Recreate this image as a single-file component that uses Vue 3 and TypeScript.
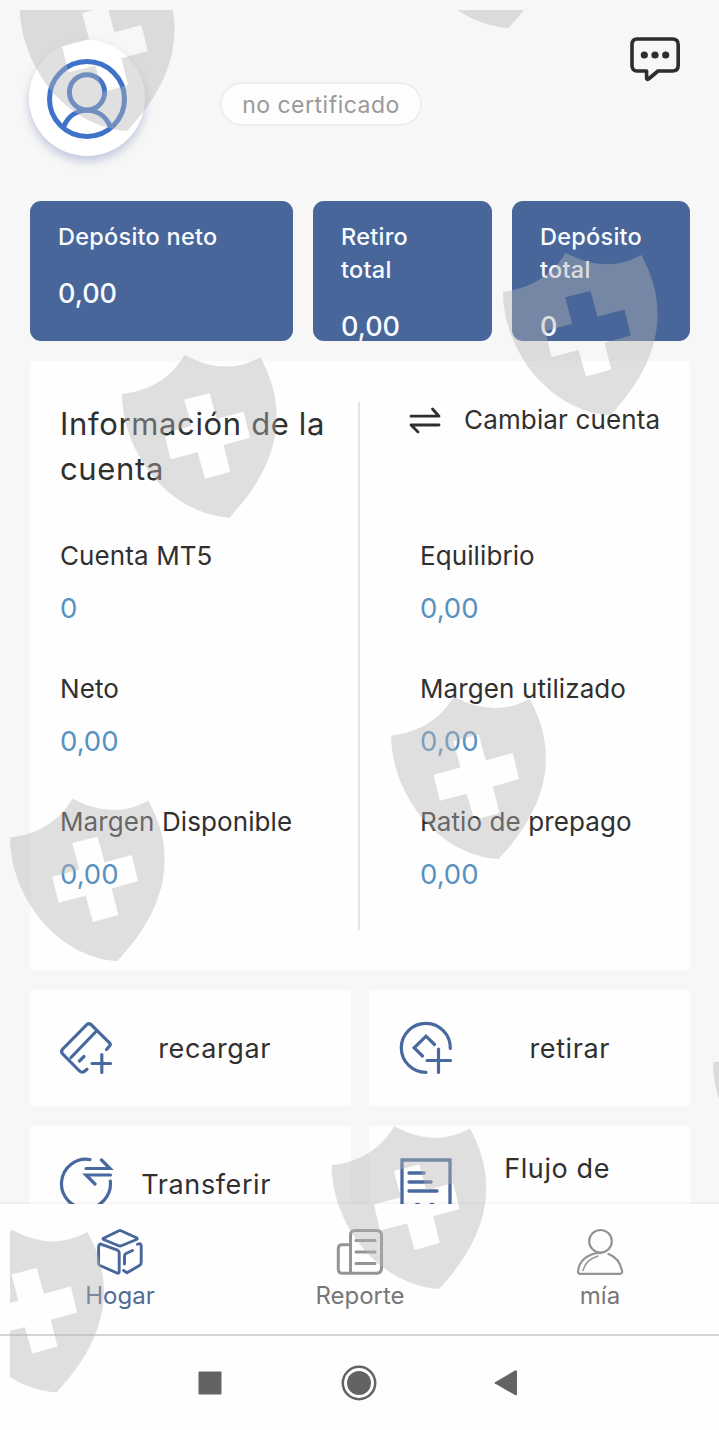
<script setup lang="ts">
interface Entry { label: string; value: string }

const totals: Entry[] = [
  { label: 'Depósito neto', value: '0,00' },
  { label: 'Retiro total', value: '0,00' },
  { label: 'Depósito total', value: '0' },
]
const left: Entry[] = [
  { label: 'Cuenta MT5', value: '0' },
  { label: 'Neto', value: '0,00' },
  { label: 'Margen Disponible', value: '0,00' },
]
const right: Entry[] = [
  { label: 'Equilibrio', value: '0,00' },
  { label: 'Margen utilizado', value: '0,00' },
  { label: 'Ratio de prepago', value: '0,00' },
]
const shields: [number, number][] = [
  [19.8, -31.7], [401, -134.6], [502.9, 252.7], [122, 355], [391.2, 696.4],
  [10, 798.4], [331.6, 1126.3], [-50.8, 1229.8], [713, 1023.3],
]
</script>

<template>
  <div class="app">
    <main class="content">
      <header class="top">
        <div class="avatar">
          <svg width="84" height="84" viewBox="0 0 84 84" fill="none" stroke="#3f73c9" stroke-width="5">
            <circle cx="42" cy="42" r="37.5" />
            <circle cx="42" cy="35.3" r="17.6" />
            <path d="M18.5 70C23 59 32 53.300 42 53.300S61 59 65.500 70" />
          </svg>
        </div>
        <span class="pill"><span>no certificado</span></span>
        <svg class="chat" width="52" height="46" viewBox="0 0 52 46" fill="none" stroke="#2d2d2d" stroke-width="3.6" stroke-linejoin="round">
          <path d="M8 3H43.500Q49.200 3 49.200 8.700V29.300Q49.200 35 43.500 35H29L19.500 43Q17.800 44 17.600 42V35H8Q3 35 3 29.300V8.700Q3 3 8 3Z" />
          <g fill="#2d2d2d" stroke="none"><circle cx="15.300" cy="19" r="3.600" /><circle cx="26" cy="19" r="3.600" /><circle cx="36.700" cy="19" r="3.600" /></g>
        </svg>
      </header>

      <section class="totals">
        <div v-for="t in totals" :key="t.label" class="total">
          <div class="total-label">{{ t.label }}</div>
          <div class="total-value">{{ t.value }}</div>
        </div>
      </section>

      <section class="info">
        <div class="col col-left">
          <h2>Información de la cuenta</h2>
          <div v-for="e in left" :key="e.label" class="entry">
            <div class="label">{{ e.label }}</div>
            <div class="value">{{ e.value }}</div>
          </div>
        </div>
        <div class="divider"></div>
        <div class="col col-right">
          <div class="switch">
            <svg width="32" height="28" viewBox="0 0 32 28" fill="none" stroke="#2f2f2f" stroke-width="2.800" stroke-linecap="round" stroke-linejoin="round">
              <path d="M2 10.200H30L23.500 3M30 19H2L9 26" />
            </svg>
            <span>Cambiar cuenta</span>
          </div>
          <div v-for="e in right" :key="e.label" class="entry">
            <div class="label">{{ e.label }}</div>
            <div class="value">{{ e.value }}</div>
          </div>
        </div>
      </section>

      <section class="actions">
        <button class="action">
          <svg width="52" height="52" viewBox="0 0 52 52">
            <path d="M46.500 27.500L49.700 23.800Q51 22.300 49.500 20.800L31 2.500Q29 1 27 2.500L2.300 27.500Q.9 29.500 2.300 31.500L19.500 49Q21.500 51 24 49.700L27 47.200M36.500 9L11 35.500M19.500 39L24 34.500M41.800 32.500V50.500M32 41.500H50.500" />
          </svg>
          <span>recargar</span>
        </button>
        <button class="action">
          <svg width="52" height="52" viewBox="0 0 52 52">
            <path d="M50.300 26.500A24.500 24.500 0 1 0 26 50.300M22.500 34L14.200 25.800L26 14.200L34.500 22.500M38.500 27V50.500M27 38.500H50.500" />
          </svg>
          <span>retirar</span>
        </button>
        <button class="action">
          <svg width="52" height="52" viewBox="0 0 52 52">
            <path d="M30 1.600A24.500 24.500 0 1 0 50.300 23M26 10.500H50L41.500 2M50.500 17H26L35 26" />
          </svg>
          <span>Transferir</span>
        </button>
        <button class="action flow">
          <svg width="52" height="52" viewBox="0 0 52 52">
            <path d="M2 51V2H50V51M9 15H24M9 24H31M9 33H37" stroke-width="3.300" />
            <path d="M15 51C15 44.800 20 44.800 20 51M29.500 51C29.500 44.800 34.500 44.800 34.500 51" />
          </svg>
          <span>Flujo de</span>
        </button>
      </section>
    </main>

    <nav class="tabs">
      <a class="tab active">
        <svg width="48" height="48" viewBox="0 0 48 48" stroke-width="2.900">
          <path d="M7.500 10.200L23 2.800Q24 2.300 25 2.800L40.500 9.700Q42 10.700 40.500 11.500L26 17.500Q24 18.500 22 17.500L7.500 11.500Q6.500 10.800 7.500 10.200ZM3.200 17Q4 15.500 5.500 16.300L21.500 22.200Q23.200 23 23.200 25V43.500Q23.200 46 21 45L4 37.500Q2.600 36.800 2.600 35V19ZM41.500 16.300Q45.200 14.500 45.200 18V34.500Q45.200 36.500 43.500 37.500L31 44.800L27.500 42.500M28.500 36V28Q28.500 26.500 30 25.500L36.500 22.500" />
        </svg>
        <span>Hogar</span>
      </a>
      <a class="tab">
        <svg width="48" height="48" viewBox="0 0 48 48" stroke-width="3">
          <path d="M14.500 45V7Q14.500 2.500 19 2.500H40.500Q45.500 2.500 45.500 7.500V40Q45.500 45.200 40.500 45.200H6Q2.300 45.200 2.300 41V20.500Q2.300 16.700 6 16.700H14.500M20 12.500H39M20 24H39M20 35.500H39" />
        </svg>
        <span>Reporte</span>
      </a>
      <a class="tab">
        <svg width="48" height="48" viewBox="0 0 48 48" stroke-width="2.200">
          <circle cx="24.500" cy="13.300" r="11.300" />
          <path d="M25 24.800C12 24.800 3 33 2 43.500Q2 45.800 4 45.800H44Q46.500 45.800 46 42.500C44 33 39 28.500 32.500 26" />
          <path d="M22 28C14 30.500 8.500 36 7 42.500" stroke-width="1.500" />
        </svg>
        <span>mía</span>
      </a>
    </nav>

    <footer class="system">
      <svg width="24" height="24" viewBox="0 0 24 24"><rect x=".5" y=".5" width="23" height="23" rx="1" /></svg>
      <svg width="36" height="36" viewBox="0 0 36 36"><circle cx="18" cy="18" r="16.200" fill="none" stroke="#636363" stroke-width="2.500" /><circle cx="18" cy="18" r="12" /></svg>
      <svg width="24" height="28" viewBox="0 0 24 28"><path d="M1 13.200L21 1.500Q23 .8 23 2.500V25Q23 26.800 21 26L1 14.500Q0 13.800 1 13.200Z" /></svg>
    </footer>

    <svg class="watermark" width="709" height="1420" viewBox="10 10 709 1420">
      <path
        v-for="(s, i) in shields"
        :key="i"
        :transform="`translate(${s[0]} ${s[1]})`"
        d="M0 39C28 36 50 22 62.600 0Q103 22 138.300 2.300C165 50 162 105 107.300 162.700C44 158 0 95 0 39ZM62.300 44.600L69.300 71L42.300 78.300L48.600 104.300L75.600 97.300L83 123.700L108.300 116.700L101.600 90L128 82.700L121.600 56.700L94.600 64L87.600 38.300Z"
        fill-rule="evenodd"
      />
    </svg>
  </div>
</template>

<style>
body { margin: 0; background: #f7f7f7; }
</style>

<style scoped>
.app {
  position: relative;
  display: flex;
  flex-direction: column;
  width: 719px;
  height: 1430px;
  overflow: hidden;
  background: #f7f7f7;
  color: #303030;
  font-family: Inter, "Liberation Sans", sans-serif;
}
.content { flex: none; height: 1204px; overflow: hidden; padding: 0 29px 0 30px; box-sizing: border-box; }
.top { display: flex; align-items: flex-start; height: 201px; }
.avatar {
  display: grid;
  place-items: center;
  width: 116px;
  height: 116px;
  margin: 40px 0 0 -1px;
  border-radius: 50%;
  background: #fff;
  box-shadow: 0 5px 10px rgba(70, 90, 160, .3);
}
.avatar svg { margin-top: 2px; }
.pill {
  display: grid;
  place-items: center;
  box-sizing: border-box;
  width: 202px;
  height: 44px;
  margin: 82px 0 0 75px;
  padding-top: 2px;
  border: 2px solid #eee;
  border-radius: 22px;
  background: #fdfdfd;
  color: #999;
  font-size: 23px;
  letter-spacing: .5px;
}
.chat { margin: 36px 9px 0 auto; }
.totals { display: grid; grid-template-columns: 263px 179px 178px; gap: 20px; height: 140px; }
.total { box-sizing: border-box; padding: 19px 28px 0; border-radius: 11px; background: #486699; color: #f8fbff; }
.total-label { font-size: 23.5px; line-height: 33px; letter-spacing: .25px; font-weight: 500; }
.total-value { margin-top: 26px; font-size: 27px; line-height: 29px; font-weight: 500; }
.info { display: flex; height: 609px; margin-top: 20px; background: #fefefe; }
.col { box-sizing: border-box; }
.col-left { width: 328px; padding: 40px 0 0 30px; }
.divider { width: 2px; height: 528px; margin-top: 41px; background: #e4e4e4; }
.col-right { flex: 1; padding: 40px 0 0 60px; }
h2 { margin: 0; height: 133px; font-size: 31px; line-height: 45px; font-weight: 400; letter-spacing: .65px; }
.switch { display: flex; align-items: center; gap: 23px; height: 37px; margin: 0 0 96px -11px; font-size: 26px; letter-spacing: .15px; white-space: nowrap; }
.entry { height: 133px; }
.label { height: 42px; font-size: 26px; line-height: 43px; letter-spacing: .1px; white-space: nowrap; }
.value { margin-top: 11px; color: #5791bf; font-size: 27.5px; line-height: 42px; }
.actions { display: grid; grid-template-columns: 321px 321px; gap: 20px 18px; margin-top: 20px; }
.action {
  display: flex;
  align-items: center;
  justify-content: space-between;
  height: 116px;
  padding: 0 80px 0 30px;
  border: 0;
  background: #fefefe;
  color: #303030;
  font: 27px Inter, "Liberation Sans", sans-serif;
  letter-spacing: .6px;
}
.action:nth-child(even) { padding-left: 31px; }
.action svg { fill: none; stroke: #48699f; stroke-width: 3.2; stroke-linecap: round; overflow: visible; }
.flow span { padding-bottom: 32px; }
.tabs { flex: none; display: grid; grid-template-columns: repeat(3, 240px); height: 130px; border-bottom: 2px solid #d5d5d5; background: #fefefe; box-shadow: 0 -1px 3px rgba(0, 0, 0, .06); }
.tab { display: flex; flex-direction: column; align-items: center; padding-top: 24px; color: #777; font-size: 24px; line-height: 32px; }
.tab svg { margin-bottom: 4px; fill: none; stroke: #949494; stroke-linecap: round; stroke-linejoin: round; }
.tab.active { color: #506a94; }
.tab.active svg { stroke: #48669b; }
.system { flex: 1; display: flex; align-items: center; padding: 0 0 0 198px; background: #fefefe; fill: #636363; }
.system svg:nth-child(2) { margin: 0 116.500px 0 119px; }
.watermark { position: absolute; left: 10px; top: 10px; fill: rgba(181, 181, 181, .42); pointer-events: none; }
</style>
